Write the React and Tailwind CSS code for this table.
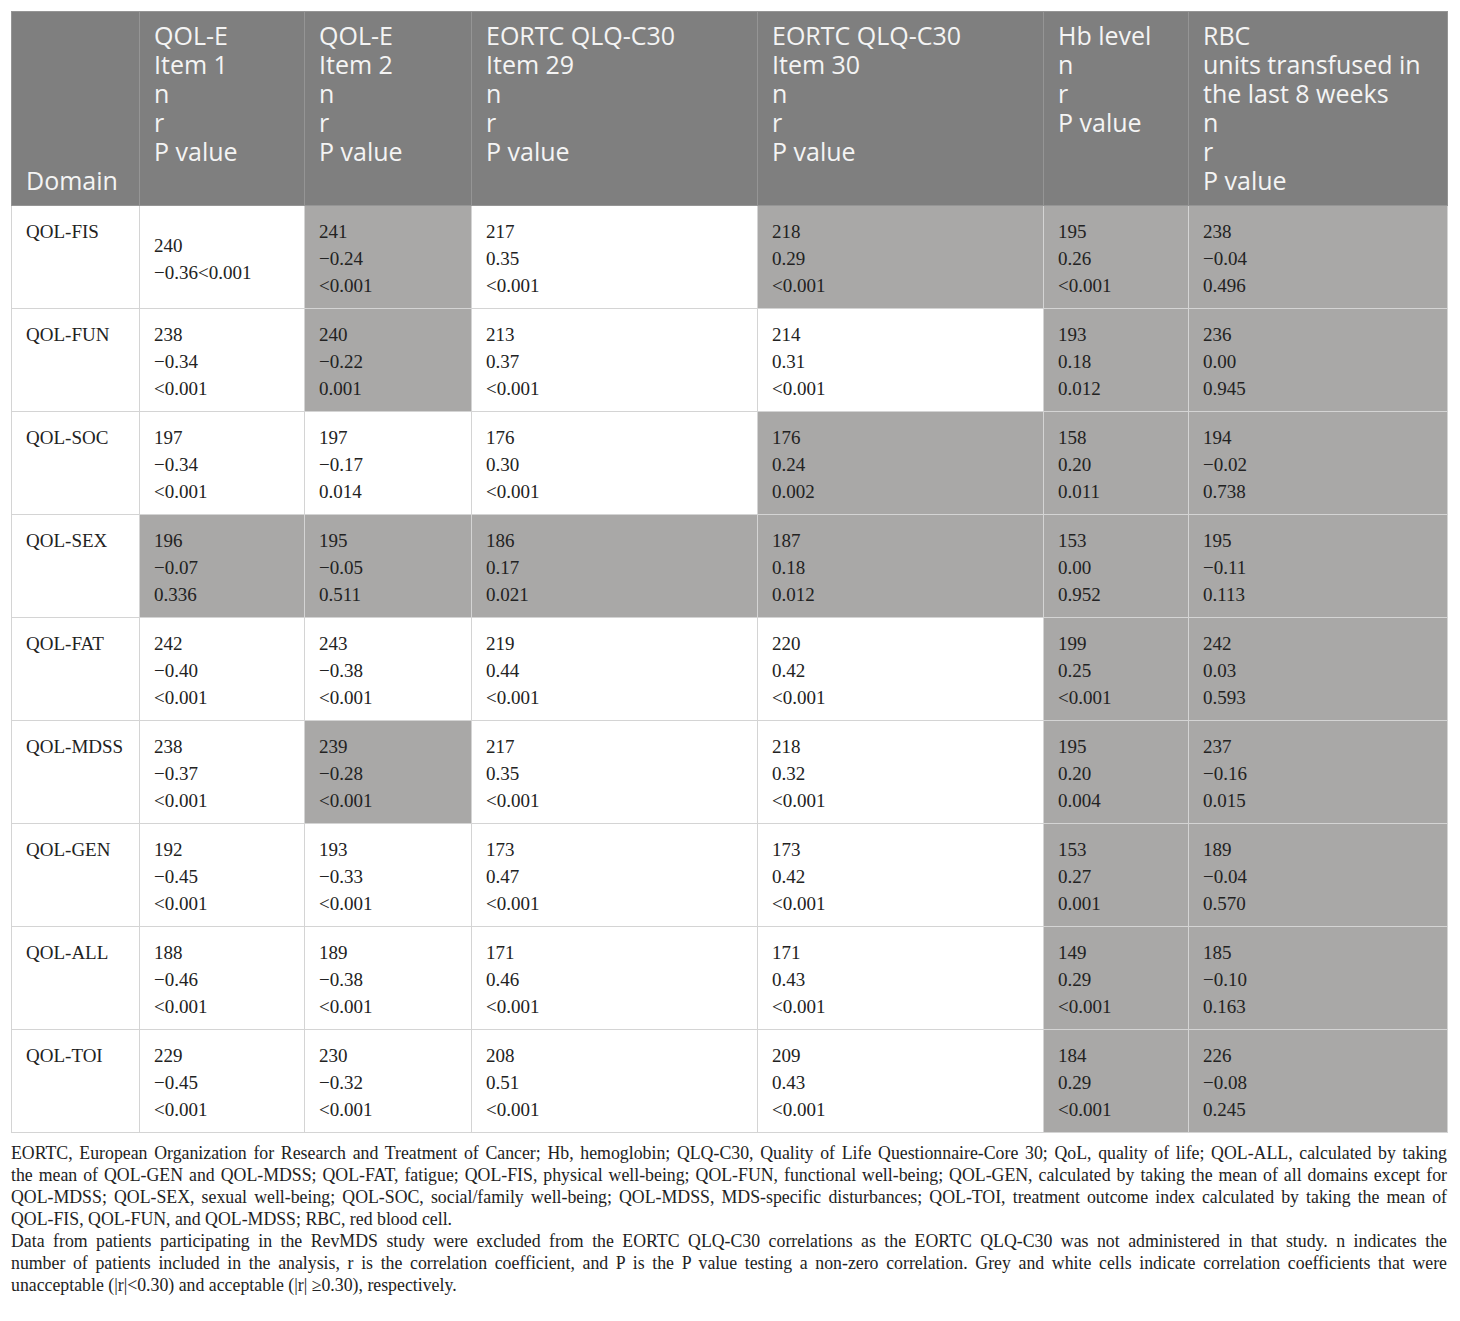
const columns = [
  'QOL-E\nItem 1\nn\nr\nP value',
  'QOL-E\nItem 2\nn\nr\nP value',
  'EORTC QLQ-C30\nItem 29\nn\nr\nP value',
  'EORTC QLQ-C30\nItem 30\nn\nr\nP value',
  'Hb level\nn\nr\nP value',
  'RBC\nunits transfused in\nthe last 8 weeks\nn\nr\nP value',
]

// g = grey cell (|r| < 0.30)
const rows = [
  {
    domain: 'QOL-FIS',
    cells: [
      { v: ['240', '\u22120.36<0.001'], mid: true },
      { v: ['241', '\u22120.24', '<0.001'], g: true },
      { v: ['217', '0.35', '<0.001'] },
      { v: ['218', '0.29', '<0.001'], g: true },
      { v: ['195', '0.26', '<0.001'], g: true },
      { v: ['238', '\u22120.04', '0.496'], g: true },
    ],
  },
  {
    domain: 'QOL-FUN',
    cells: [
      { v: ['238', '\u22120.34', '<0.001'] },
      { v: ['240', '\u22120.22', '0.001'], g: true },
      { v: ['213', '0.37', '<0.001'] },
      { v: ['214', '0.31', '<0.001'] },
      { v: ['193', '0.18', '0.012'], g: true },
      { v: ['236', '0.00', '0.945'], g: true },
    ],
  },
  {
    domain: 'QOL-SOC',
    cells: [
      { v: ['197', '\u22120.34', '<0.001'] },
      { v: ['197', '\u22120.17', '0.014'] },
      { v: ['176', '0.30', '<0.001'] },
      { v: ['176', '0.24', '0.002'], g: true },
      { v: ['158', '0.20', '0.011'], g: true },
      { v: ['194', '\u22120.02', '0.738'], g: true },
    ],
  },
  {
    domain: 'QOL-SEX',
    cells: [
      { v: ['196', '\u22120.07', '0.336'], g: true },
      { v: ['195', '\u22120.05', '0.511'], g: true },
      { v: ['186', '0.17', '0.021'], g: true },
      { v: ['187', '0.18', '0.012'], g: true },
      { v: ['153', '0.00', '0.952'], g: true },
      { v: ['195', '\u22120.11', '0.113'], g: true },
    ],
  },
  {
    domain: 'QOL-FAT',
    cells: [
      { v: ['242', '\u22120.40', '<0.001'] },
      { v: ['243', '\u22120.38', '<0.001'] },
      { v: ['219', '0.44', '<0.001'] },
      { v: ['220', '0.42', '<0.001'] },
      { v: ['199', '0.25', '<0.001'], g: true },
      { v: ['242', '0.03', '0.593'], g: true },
    ],
  },
  {
    domain: 'QOL-MDSS',
    cells: [
      { v: ['238', '\u22120.37', '<0.001'] },
      { v: ['239', '\u22120.28', '<0.001'], g: true },
      { v: ['217', '0.35', '<0.001'] },
      { v: ['218', '0.32', '<0.001'] },
      { v: ['195', '0.20', '0.004'], g: true },
      { v: ['237', '\u22120.16', '0.015'], g: true },
    ],
  },
  {
    domain: 'QOL-GEN',
    cells: [
      { v: ['192', '\u22120.45', '<0.001'] },
      { v: ['193', '\u22120.33', '<0.001'] },
      { v: ['173', '0.47', '<0.001'] },
      { v: ['173', '0.42', '<0.001'] },
      { v: ['153', '0.27', '0.001'], g: true },
      { v: ['189', '\u22120.04', '0.570'], g: true },
    ],
  },
  {
    domain: 'QOL-ALL',
    cells: [
      { v: ['188', '\u22120.46', '<0.001'] },
      { v: ['189', '\u22120.38', '<0.001'] },
      { v: ['171', '0.46', '<0.001'] },
      { v: ['171', '0.43', '<0.001'] },
      { v: ['149', '0.29', '<0.001'], g: true },
      { v: ['185', '\u22120.10', '0.163'], g: true },
    ],
  },
  {
    domain: 'QOL-TOI',
    cells: [
      { v: ['229', '\u22120.45', '<0.001'] },
      { v: ['230', '\u22120.32', '<0.001'] },
      { v: ['208', '0.51', '<0.001'] },
      { v: ['209', '0.43', '<0.001'] },
      { v: ['184', '0.29', '<0.001'], g: true },
      { v: ['226', '\u22120.08', '0.245'], g: true },
    ],
  },
]

// footnote lines as set in the source, last line of each paragraph left ragged
const notes = [
  { t: 'EORTC, European Organization for Research and Treatment of Cancer; Hb, hemoglobin; QLQ-C30, Quality of Life Questionnaire-Core 30; QoL, quality of life; QOL-ALL, calculated by taking', j: true },
  { t: 'the mean of QOL-GEN and QOL-MDSS; QOL-FAT, fatigue; QOL-FIS, physical well-being; QOL-FUN, functional well-being; QOL-GEN, calculated by taking the mean of all domains except for', j: true },
  { t: 'QOL-MDSS; QOL-SEX, sexual well-being; QOL-SOC, social/family well-being; QOL-MDSS, MDS-specific disturbances; QOL-TOI, treatment outcome index calculated by taking the mean of', j: true },
  { t: 'QOL-FIS, QOL-FUN, and QOL-MDSS; RBC, red blood cell.' },
  { t: 'Data from patients participating in the RevMDS study were excluded from the EORTC QLQ-C30 correlations as the EORTC QLQ-C30 was not administered in that study. n indicates the', j: true },
  { t: 'number of patients included in the analysis, r is the correlation coefficient, and P is the P value testing a non-zero correlation. Grey and white cells indicate correlation coefficients that were', j: true },
  { t: 'unacceptable (|r|<0.30) and acceptable (|r| \u22650.30), respectively.' },
]

const widths = ['w-[128px]', 'w-[165px]', 'w-[167px]', 'w-[286px]', 'w-[286px]', 'w-[145px]', 'w-[259px]']

export default function App() {
  return (
    <div className="bg-white px-[11px] pt-[11px] w-[1460px] min-h-[1321px]">
      <table className="table-fixed border-collapse w-[1436px]">
        <colgroup>
          {widths.map((w, i) => (
            <col key={i} className={w} />
          ))}
        </colgroup>
        <thead>
          <tr className="bg-[#7f7f7f] text-[#f4f4f4] font-['Open_Sans',sans-serif] text-[25px] leading-[29px]">
            <th className="border border-[#959595] px-[14px] pb-[10px] align-bottom text-left font-normal">
              Domain
            </th>
            {columns.map((c, i) => (
              <th
                key={i}
                className="border border-[#959595] px-[14px] pt-[9px] pb-[10px] align-top text-left font-normal whitespace-pre-line"
              >
                {c}
              </th>
            ))}
          </tr>
        </thead>
        <tbody className="font-['Liberation_Serif',serif] text-[19px] leading-[27px] text-[#222]">
          {rows.map((r) => (
            <tr key={r.domain} className="h-[103px]">
              <td className="border border-[#d4d4d4] px-[14px] pt-[12px] align-top bg-white">{r.domain}</td>
              {r.cells.map((c, i) => (
                <td
                  key={i}
                  className={`border border-[#d4d4d4] px-[14px] ${c.mid ? 'align-middle pt-[3px]' : 'pt-[12px] align-top'} ${c.g ? 'bg-[#a9a8a7]' : 'bg-white'}`}
                >
                  {c.v.map((line, j) => (
                    <div key={j}>{line}</div>
                  ))}
                </td>
              ))}
            </tr>
          ))}
        </tbody>
      </table>
      <div className="font-['Liberation_Serif',serif] text-[17.8px] leading-[22px] text-[#222] pt-[9px] w-[1436px]">
        {notes.map((n, i) => (
          <div
            key={i}
            className={n.j ? 'whitespace-nowrap text-justify [text-align-last:justify]' : 'whitespace-nowrap text-left'}
          >
            {n.t}
          </div>
        ))}
      </div>
    </div>
  )
}
